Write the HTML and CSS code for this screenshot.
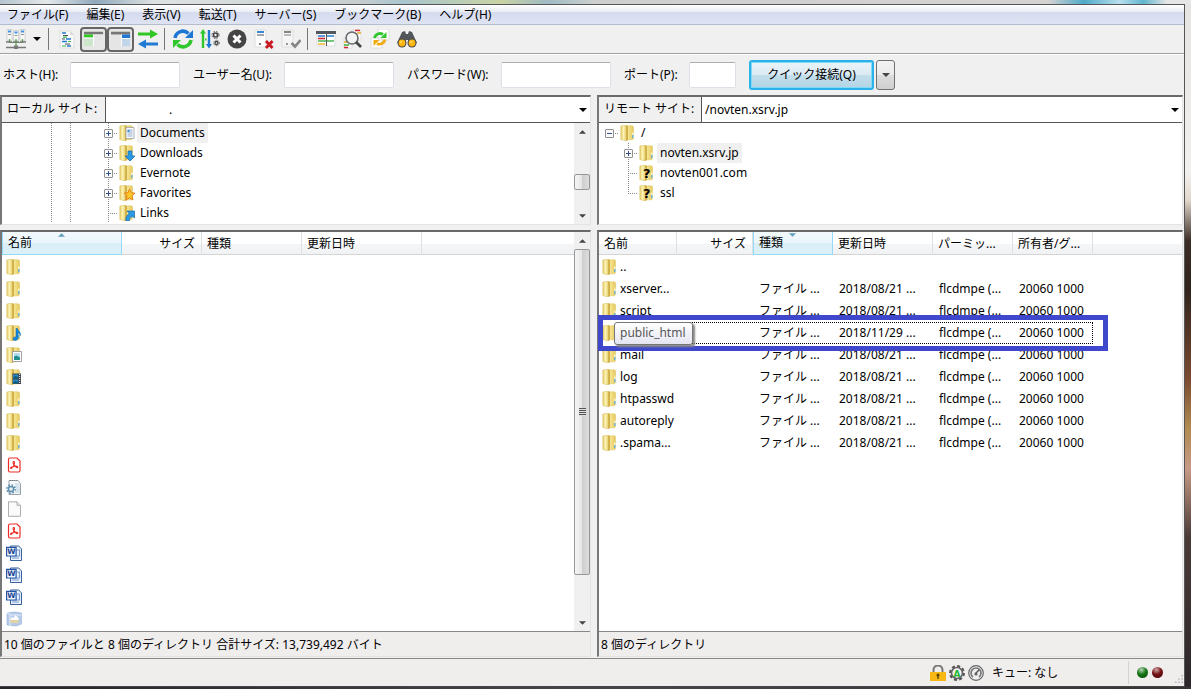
FILE: index.html
```html
<!DOCTYPE html>
<html lang="ja">
<head>
<meta charset="utf-8">
<title>FTP クライアント</title>
<link rel="stylesheet" href="styles.css">
</head>
<body>
<svg class="defs" aria-hidden="true">
  <defs>
    <linearGradient id="gold" x1="0" x2="1"><stop offset="0" stop-color="#fbf0a8"/><stop offset="1" stop-color="#e6c95e"/></linearGradient>
    <linearGradient id="gold2" x1="0" x2="1"><stop offset="0" stop-color="#e3c762"/><stop offset=".45" stop-color="#fcf4b8"/><stop offset="1" stop-color="#e6cc66"/></linearGradient>
    <symbol id="folder" viewBox="0 0 16 16">
      <path d="M6 .8h6.500l1 1v12l-1 1H6z" fill="url(#gold)" stroke="#dcc260" stroke-width=".5"/>
      <path d="M.8 1 6.500 0v16L.8 14.500z" fill="url(#gold2)" stroke="#d6bc5c" stroke-width=".5"/>
      <path d="M6.200.5 8 1v14l-1.800 1z" fill="#d0ae48"/>
      <path d="M12 7.500h1.700V13H12z" fill="#f8f0c0"/><path d="M12.200 10h1.200v3h-1.200z" fill="#4ba3d8"/>
    </symbol>
    <symbol id="folder-doc" viewBox="0 0 16 16"><use href="#folder"/><path d="M7 2.500h8v11H7z" fill="#fafcff" stroke="#9a9fa6" stroke-width=".8"/><path d="M8.500 5h5M8.500 7h5M8.500 9h5M8.500 11h5" stroke="#8aa3bf" stroke-width=".9"/><path d="M8.500 5h2v2h-2z" fill="#3a8fd4"/></symbol>
    <symbol id="folder-down" viewBox="0 0 16 16"><use href="#folder"/><path d="M9 6h4v5h3l-5 5-5-5h3z" fill="#2b9be6" stroke="#1567ab" stroke-width=".7"/></symbol>
    <symbol id="folder-star" viewBox="0 0 16 16"><use href="#folder"/><path d="m10.500 4 1.600 3.800 3.900.3-3 2.600 1 4.300-3.500-2.200L7 15l1-4.300-3-2.600 4-.3z" fill="#ffc928" stroke="#e57819" stroke-width=".9"/></symbol>
    <symbol id="folder-link" viewBox="0 0 16 16"><use href="#folder"/><path d="M8 6h7.500v7l-2.500-2.200c-2 1-2.600 2.700-2.500 5H7C6.200 12.500 8 10 10.300 8.500z" fill="#2b9be6" stroke="#1567ab" stroke-width=".7"/></symbol>
    <symbol id="folder-music" viewBox="0 0 16 16"><use href="#folder"/><path d="M10 3.500h1.500c.2 2.500 3.500 3 3 7l-1-1.700-1.500-1v5.500c0 1.500-1.500 2.200-3 2.200s-2.500-1.300-1.700-2.500S9.200 11.800 10 12z" fill="#168bdc" stroke="#0b5fa5" stroke-width=".5"/></symbol>
    <symbol id="folder-picture" viewBox="0 0 16 16"><use href="#folder"/><path d="M6.500 4.500h9v10h-9z" fill="#fff" stroke="#999" stroke-width=".9"/><path d="M8 6h6v7H8z" fill="#b4dcf0"/><path d="m8 9.500 2.500-1 3.500 2V13H8z" fill="#238c8c"/></symbol>
    <symbol id="folder-video" viewBox="0 0 16 16"><use href="#folder"/><path d="M6.500 4.500H15v10.500H6.500z" fill="#38404a"/><path d="M7 5.500h5.300v4H7zm0 5h5.300v4H7z" fill="#2785c5"/><path d="m7 9 2-2 3 1v1.500H7zm0 5 2-2 3 1v1.500H7z" fill="#135c70"/><path d="M13.700 5v10" stroke="#fff" stroke-dasharray="1 1"/></symbol>
    <symbol id="folder-unknown" viewBox="0 0 16 16"><use href="#folder"/><text x="4" y="13" font-family="DejaVu Sans, sans-serif" font-size="13" font-weight="700" fill="#000">?</text></symbol>
    <symbol id="pdf" viewBox="0 0 16 16"><path d="M4 1h7l3 3v9.500c0 1-.5 1.500-1.500 1.500H4c-1 0-1.500-.5-1.500-1.500v-11C2.500 1.500 3 1 4 1z" fill="#fff" stroke="#ee2c24" stroke-width="1.200"/><path d="M7.500 4.500c1.500-.5 1 2 .5 3.500S5.500 12 4.700 11.300s2.300-1.800 3.800-2.100 3.500.1 3.300 1-1.800.1-3-1.200S6.300 5 7.500 4.500z" fill="none" stroke="#ee2c24" stroke-width="1.100"/></symbol>
    <symbol id="config" viewBox="0 0 16 16"><path d="M3 1.500h9l2.500 3V15.500H3z" fill="#f7fafc" stroke="#8f979e" stroke-width=".9"/><path d="M4 1.500h8" stroke="#777" stroke-dasharray="1 1"/><path d="M9 5h4.500M9.500 7h4M10 9h4M10 11h4M9 13h5" stroke="#a9cbe1" stroke-width=".9"/><circle cx="5" cy="10" r="4.200" fill="none" stroke="#5e8cab" stroke-width="1.400" stroke-dasharray="1.700 1.600"/><circle cx="5" cy="10" r="2.600" fill="#e4f0f8" stroke="#5e8cab" stroke-width="1.500"/></symbol>
    <symbol id="blank" viewBox="0 0 16 16"><path d="M2.500.8H11l3.500 3.500v11h-12z" fill="#fafafa" stroke="#999" stroke-width=".8"/><path d="M11 .8v3.500h3.500" fill="#eee" stroke="#999" stroke-width=".8"/></symbol>
    <symbol id="word" viewBox="0 0 16 16"><path d="M4.500 1h8.300L15.500 4v11.500h-11z" fill="#edf4ff" stroke="#355f9d"/><path d="M11 5h2.500v6h-8M6 13h7" fill="none" stroke="#7297cc" stroke-width="1.200"/><path d="M.6 2.300h9.500V11H.6z" fill="#f3f7ff" stroke="#2455a4" stroke-width="1.200"/><text x="1.300" y="9.300" font-family="DejaVu Sans, sans-serif" font-size="7.500" font-weight="700" fill="#194391">W</text></symbol>
    <symbol id="package" viewBox="0 0 16 16"><path d="m1 2 8-1 6.500 1v11L10 15l-9-1z" fill="#b7cbe6" stroke="#91afd9" stroke-width=".6"/><path d="m1 2 4 2h10.500M4 4v11" stroke="#dfecff" fill="none"/><path d="M4.500 7.500h8V12h-8z" fill="#e3d3a3"/><path d="m4.500 8 2-2 1 1 2-3 3 3v2h-8z" fill="#fff"/></symbol>
    <symbol id="site-manager" viewBox="0 0 20 20"><g fill="#fafafa" stroke="#c4c4c4" stroke-width=".7"><path d="M1 .5h5v11H1zM7.500 1.500h5v10h-5zM14 .5h5v11h-5z"/></g><path d="M2 2.500h3M8.500 3.500h3M15 2.500h3" stroke="#3e91e3" stroke-width="1.800"/><path d="M2 5.500h3M8.500 6.500h3M15 5.500h3" stroke="#999"/><path d="M3.500 10v3.500h13V10M10 10v8" stroke="#58a94a" stroke-width="1.200" fill="none"/><path d="M0 13h6M7 13h6M14 13h6M0 18.500h20" stroke="#777" stroke-width="1.600"/><path d="M8 16.500h4V20H8z" fill="#777"/></symbol>
    <symbol id="log" viewBox="0 0 20 20"><path d="M3 2h10l4 4v13H3z" fill="#f9f9f9" stroke="#ddd"/><path d="M13 2v4h4" fill="#ddd"/><path d="M5 4h4M9 10h5M5 12.500h5M10 17h4" stroke="#2479d0" stroke-width="1.300"/><path d="M6 6.500h5M5 10h3M8 15h5" stroke="#4c525a" stroke-width="1.200"/><path d="M6 8.200h4M11 12.500h3M5 17h4" stroke="#39b54a" stroke-width="1.200"/></symbol>
    <symbol id="local-tree" viewBox="0 0 22 20"><path d="M0 2h21v16H0z" fill="#f6f6f6"/><path d="M0 2h21v3H0z" fill="#777"/><path d="M0 5h10v3.500H0z" fill="#2fca22"/><path d="M0 8.500h10V18H0z" fill="#cce6cc"/><path d="M11 5h10v13H11z" fill="#e6e6e6"/><path d="M10.500 5v13M0 9h10" stroke="#fff"/></symbol>
    <symbol id="remote-tree" viewBox="0 0 22 20"><path d="M0 2h21v16H0z" fill="#e5e5e5"/><path d="M0 2h21v3H0z" fill="#777"/><path d="M12 5h9v4h-9z" fill="#2078d2"/><path d="M12 9h9v9h-9z" fill="#c1d7e9"/><path d="M11.500 5v13M12 9.500h9" stroke="#fff"/></symbol>
    <symbol id="transfer" viewBox="0 0 20 20"><path d="M0 3.500h12V.5L20 5l-8 4.500v-3H0z" fill="#30c725"/><path d="M20 13.500H8v-3L0 15l8 4.500v-3h12z" fill="#207bd4"/></symbol>
    <symbol id="refresh" viewBox="0 0 20 20"><path d="M2 9a8 8 0 0 1 13.500-4.500" fill="none" stroke="#1e78d3" stroke-width="3.600"/><path d="M20 1v8h-8z" fill="#1e78d3"/><path d="M18 11A8 8 0 0 1 4.500 15.500" fill="none" stroke="#2fc72c" stroke-width="3.600"/><path d="M0 19v-8h8z" fill="#2fc72c"/></symbol>
    <symbol id="process" viewBox="0 0 20 20"><path d="m3 0 3 4.500H4.200V19H1.800V4.500H0zM5 9.500h1.500v2H5z" fill="#2fc72c"/><path d="M7.800 1h2.400v14H12l-3 4.500L6 15h1.800z" fill="#1e78d3"/><g fill="none" stroke="#444"><circle cx="15.500" cy="6" r="2" stroke-width="1.600"/><circle cx="15.500" cy="6" r="3.500" stroke-dasharray="1.500 1.300"/><circle cx="16.500" cy="14" r="1.500" stroke-width="1.300"/><circle cx="16.500" cy="14" r="2.800" stroke-dasharray="1 1"/></g></symbol>
    <symbol id="cancel" viewBox="0 0 20 20"><circle cx="10" cy="10" r="9.500" fill="#454545"/><path d="m6.500 6.500 7 7m0-7-7 7" stroke="#fff" stroke-width="3"/></symbol>
    <symbol id="disconnect" viewBox="0 0 20 20"><path d="M1 1h11v17H1z" fill="#fcfcfc" stroke="#ddd"/><path d="M3 3h7" stroke="#217bd2" stroke-width="1.800"/><path d="M3 6h7" stroke="#777" stroke-width="1.300"/><circle cx="6" cy="15" r="1" fill="#555"/><path d="m12 12 6.500 7m0-7L12 19" stroke="#c71922" stroke-width="2.800"/></symbol>
    <symbol id="reconnect" viewBox="0 0 20 20"><path d="M1 1h11v17H1z" fill="#f5f5f5" stroke="#ddd"/><path d="M3 3h7" stroke="#777" stroke-width="1.800"/><path d="M3 6h7" stroke="#999" stroke-width="1.300"/><circle cx="6" cy="15" r="1" fill="#777"/><path d="m10.500 14 3.500 3.500 5.500-6.500" fill="none" stroke="#858585" stroke-width="2.600"/></symbol>
    <symbol id="filter" viewBox="0 0 20 20"><path d="M1 3h18v14H1z" fill="#fff" stroke="#ddd"/><path d="M0 2h20v3H0z" fill="#53585d"/><path d="M2 7h7m2 0h7" stroke="#267fd1" stroke-width="1.400"/><path d="M2 9.500h7" stroke="#d62732" stroke-width="1.600"/><path d="M2 12h16" stroke="#37ae43" stroke-width="1.400"/><path d="M2 15h7" stroke="#edb322" stroke-width="1.400"/><path d="M10.500 5v12" stroke="#555"/></symbol>
    <symbol id="search" viewBox="0 0 20 20"><path d="M9 1h9v10H9zM1 9h8v10H1z" fill="#fff" stroke="#ddd"/><path d="M12 1.500h5" stroke="#d4242d" stroke-width="1.500"/><path d="M1 13h4m9-9h4" stroke="#dfab27" stroke-width="1.500"/><path d="M1 16h5" stroke="#36ad35" stroke-width="1.500"/><path d="M1 18.500h4" stroke="#d4242d" stroke-width="1.500"/><circle cx="9" cy="9" r="6" fill="#f2f4f4" fill-opacity=".9" stroke="#65696c" stroke-width="1.600"/><path d="m13 13 5 5" stroke="#444" stroke-width="2.600"/></symbol>
    <symbol id="sync" viewBox="0 0 20 20"><path d="M8 0h11v11H8zM1 9h11v10H1z" fill="#fff" stroke="#ddd"/><path d="M4.500 9A5.500 5.500 0 0 1 13 5.500" fill="none" stroke="#2fc72c" stroke-width="2.800"/><path d="M16.500 3v6h-6z" fill="#2fc72c"/><path d="M15 10.500A5.500 5.500 0 0 1 7 14.500" fill="none" stroke="#efaa12" stroke-width="2.800"/><path d="M3.500 17v-6h6z" fill="#efaa12"/></symbol>
    <symbol id="binoculars" viewBox="0 0 20 20"><path d="m5 3 3-1 1 3h2l1-3 3 1 5 11h-9v-3H9v3H0z" fill="#51565c"/><circle cx="5" cy="14" r="4.500" fill="#4b4b4b"/><circle cx="15" cy="14" r="4.500" fill="#4b4b4b"/><circle cx="5" cy="14" r="3.400" fill="#ffb70f"/><circle cx="15" cy="14" r="3.400" fill="#ffb70f"/><path d="M3 13h2m8 0h2" stroke="#fff0a0"/></symbol>
    <symbol id="lock" viewBox="0 0 16 16"><path d="M3.500 8V5a4.500 4.500 0 0 1 9 0v3" fill="none" stroke="#777" stroke-width="2"/><path d="M0 7h16v9H0z" fill="#f8b814"/><circle cx="8" cy="10" r="1.600" fill="#604706"/><path d="M7.300 10h1.400v4H7.300z" fill="#604706"/></symbol>
    <symbol id="gear" viewBox="0 0 16 16"><circle cx="8" cy="8" r="6.700" fill="none" stroke="#555" stroke-width="2.500" stroke-dasharray="3 2.250"/><circle cx="8" cy="8" r="5.500" fill="#f5f5f5" stroke="#666" stroke-width="1.700"/><text x="4.600" y="11.500" font-family="DejaVu Sans, sans-serif" font-size="9" font-weight="700" fill="#24b933">A</text></symbol>
    <symbol id="gauge" viewBox="0 0 16 16"><circle cx="8" cy="8" r="7.300" fill="#eee" stroke="#666" stroke-width="1.200"/><path d="M5 12a5 5 0 1 1 6 0" fill="none" stroke="#777" stroke-width="1.700"/><path d="m7 9 4-4" stroke="#555" stroke-width="1.500"/><circle cx="8" cy="9" r="1.600" fill="#666"/></symbol>
    <symbol id="down" viewBox="0 0 8 4"><path d="M0 0h8L4 4z" fill="currentColor"/></symbol>
    <symbol id="up" viewBox="0 0 8 4"><path d="M0 4h8L4 0z" fill="currentColor"/></symbol>
  </defs>
</svg>

<div class="desktop">
<main class="window">
  <nav class="menu">
    <button>ファイル(F)</button><button>編集(E)</button><button>表示(V)</button><button>転送(T)</button><button>サーバー(S)</button><button>ブックマーク(B)</button><button>ヘルプ(H)</button>
  </nav>

  <div class="toolbar">
    <button aria-label="サイトマネージャー"><svg class="tool"><use href="#site-manager"/></svg></button>
    <button class="narrow" aria-label="サイト一覧"><svg class="arrow"><use href="#down"/></svg></button>
    <span class="sep"></span>
    <button aria-label="ログ"><svg class="tool"><use href="#log"/></svg></button>
    <button class="pressed" aria-label="ローカルツリー"><svg class="tool"><use href="#local-tree"/></svg></button>
    <button class="pressed" aria-label="リモートツリー"><svg class="tool"><use href="#remote-tree"/></svg></button>
    <button aria-label="転送キュー"><svg class="tool"><use href="#transfer"/></svg></button>
    <span class="sep"></span>
    <button aria-label="更新"><svg class="tool"><use href="#refresh"/></svg></button>
    <button aria-label="キュー処理"><svg class="tool"><use href="#process"/></svg></button>
    <button aria-label="中止"><svg class="tool"><use href="#cancel"/></svg></button>
    <button aria-label="切断"><svg class="tool"><use href="#disconnect"/></svg></button>
    <button aria-label="再接続"><svg class="tool"><use href="#reconnect"/></svg></button>
    <span class="sep"></span>
    <button aria-label="フィルター"><svg class="tool"><use href="#filter"/></svg></button>
    <button aria-label="比較"><svg class="tool"><use href="#search"/></svg></button>
    <button aria-label="同期"><svg class="tool"><use href="#sync"/></svg></button>
    <button aria-label="検索"><svg class="tool"><use href="#binoculars"/></svg></button>
  </div>

  <form class="quick">
    <div class="field host"><label for="host">ホスト(H):</label><input id="host" type="text"></div>
    <div class="field user"><label for="user">ユーザー名(U):</label><input id="user" type="text"></div>
    <div class="field pass"><label for="pass">パスワード(W):</label><input id="pass" type="password"></div>
    <div class="field port"><label for="port">ポート(P):</label><input id="port" type="text"></div>
    <button type="button" class="connect">クイック接続(Q)</button>
    <button type="button" class="history" aria-label="接続履歴"><svg class="arrow"><use href="#down"/></svg></button>
  </form>

  <div class="panes">
    <section class="side">
      <div class="box top">
        <div class="path local"><label for="lpath">ローカル サイト:</label><div class="combo"><select id="lpath"><option>.</option></select><svg class="arrow"><use href="#down"/></svg></div></div>
        <div class="treebox">
          <ul class="tree local-tree">
            <li><i class="g v"></i><i class="g v"></i><i class="g"></i><i class="g v h"><b class="ex plus"></b></i><svg class="ico"><use href="#folder-doc"/></svg><span class="name sel">Documents</span></li>
            <li><i class="g v"></i><i class="g v"></i><i class="g"></i><i class="g v h"><b class="ex plus"></b></i><svg class="ico"><use href="#folder-down"/></svg><span class="name">Downloads</span></li>
            <li><i class="g v"></i><i class="g v"></i><i class="g"></i><i class="g v h"><b class="ex plus"></b></i><svg class="ico"><use href="#folder"/></svg><span class="name">Evernote</span></li>
            <li><i class="g v"></i><i class="g v"></i><i class="g"></i><i class="g v h"><b class="ex plus"></b></i><svg class="ico"><use href="#folder-star"/></svg><span class="name">Favorites</span></li>
            <li><i class="g v"></i><i class="g v"></i><i class="g"></i><i class="g v h"></i><svg class="ico"><use href="#folder-link"/></svg><span class="name">Links</span></li>
          </ul>
          <div class="scroll"><button aria-label="上へ"><svg><use href="#up"/></svg></button><div class="track"><span class="gap-a"></span><span class="thumb small"></span><span class="gap-b"></span></div><button aria-label="下へ"><svg><use href="#down"/></svg></button></div>
        </div>
      </div>
      <div class="box bottom">
        <div class="listrow">
          <div class="list">
            <table class="files tl">
              <colgroup><col class="w120"><col class="w80"><col class="w100"><col class="w120"></colgroup>
              <thead><tr><th class="sorted">名前<svg class="mark"><use href="#up"/></svg></th><th class="num">サイズ</th><th>種類</th><th>更新日時</th></tr></thead>
              <tbody>
                <tr><td colspan="4"><svg class="ico"><use href="#folder"/></svg></td></tr>
                <tr><td colspan="4"><svg class="ico"><use href="#folder"/></svg></td></tr>
                <tr><td colspan="4"><svg class="ico"><use href="#folder"/></svg></td></tr>
                <tr><td colspan="4"><svg class="ico"><use href="#folder-music"/></svg></td></tr>
                <tr><td colspan="4"><svg class="ico"><use href="#folder-picture"/></svg></td></tr>
                <tr><td colspan="4"><svg class="ico"><use href="#folder-video"/></svg></td></tr>
                <tr><td colspan="4"><svg class="ico"><use href="#folder"/></svg></td></tr>
                <tr><td colspan="4"><svg class="ico"><use href="#folder"/></svg></td></tr>
                <tr><td colspan="4"><svg class="ico"><use href="#folder"/></svg></td></tr>
                <tr><td colspan="4"><svg class="ico"><use href="#pdf"/></svg></td></tr>
                <tr><td colspan="4"><svg class="ico"><use href="#config"/></svg></td></tr>
                <tr><td colspan="4"><svg class="ico"><use href="#blank"/></svg></td></tr>
                <tr><td colspan="4"><svg class="ico"><use href="#pdf"/></svg></td></tr>
                <tr><td colspan="4"><svg class="ico"><use href="#word"/></svg></td></tr>
                <tr><td colspan="4"><svg class="ico"><use href="#word"/></svg></td></tr>
                <tr><td colspan="4"><svg class="ico"><use href="#word"/></svg></td></tr>
                <tr><td colspan="4"><svg class="ico"><use href="#package"/></svg></td></tr>
              </tbody>
            </table>
          </div>
          <div class="scroll"><button aria-label="上へ"><svg><use href="#up"/></svg></button><div class="track"><span class="thumb large"><i class="grip"></i></span><span class="rest"></span></div><button aria-label="下へ"><svg><use href="#down"/></svg></button></div>
        </div>
        <div class="summary">10 個のファイルと 8 個のディレクトリ 合計サイズ: 13,739,492 バイト</div>
      </div>
    </section>

    <section class="side remote">
      <div class="box top">
        <div class="path remote-path"><label for="rpath">リモート サイト:</label><div class="combo"><select id="rpath"><option>/novten.xsrv.jp</option></select><svg class="arrow"><use href="#down"/></svg></div></div>
        <div class="treebox">
          <ul class="tree remote-tree">
            <li><i class="g h"><b class="ex"></b></i><svg class="ico"><use href="#folder"/></svg><span class="name">/</span></li>
            <li><i class="g"></i><i class="g v h"><b class="ex plus"></b></i><svg class="ico"><use href="#folder"/></svg><span class="name sel">novten.xsrv.jp</span></li>
            <li><i class="g"></i><i class="g v h"></i><svg class="ico"><use href="#folder-unknown"/></svg><span class="name">novten001.com</span></li>
            <li><i class="g"></i><i class="g v last h"></i><svg class="ico"><use href="#folder-unknown"/></svg><span class="name">ssl</span></li>
          </ul>
        </div>
      </div>
      <div class="box bottom">
        <div class="listrow">
          <div class="list">
            <table class="files tr">
              <colgroup><col class="w78"><col class="w76"><col class="w80"><col class="w100"><col class="w80"><col class="w80"></colgroup>
              <thead><tr><th>名前</th><th class="num">サイズ</th><th class="sorted">種類<svg class="mark"><use href="#down"/></svg></th><th>更新日時</th><th>パーミッ...</th><th>所有者/グ...</th></tr></thead>
              <tbody>
                <tr><td><svg class="ico"><use href="#folder"/></svg>..</td><td></td><td></td><td></td><td></td><td></td></tr>
                <tr><td><svg class="ico"><use href="#folder"/></svg>xserver...</td><td></td><td>ファイル ...</td><td>2018/08/21 ...</td><td>flcdmpe (...</td><td>20060 1000</td></tr>
                <tr><td><svg class="ico"><use href="#folder"/></svg>script</td><td></td><td>ファイル ...</td><td>2018/08/21 ...</td><td>flcdmpe (...</td><td>20060 1000</td></tr>
                <tr class="focus"><td><svg class="ico"><use href="#folder"/></svg><span class="frame"></span><span class="tip">public_html</span></td><td></td><td>ファイル ...</td><td>2018/11/29 ...</td><td>flcdmpe (...</td><td>20060 1000</td></tr>
                <tr><td><svg class="ico"><use href="#folder"/></svg>mail</td><td></td><td>ファイル ...</td><td>2018/08/21 ...</td><td>flcdmpe (...</td><td>20060 1000</td></tr>
                <tr><td><svg class="ico"><use href="#folder"/></svg>log</td><td></td><td>ファイル ...</td><td>2018/08/21 ...</td><td>flcdmpe (...</td><td>20060 1000</td></tr>
                <tr><td><svg class="ico"><use href="#folder"/></svg>htpasswd</td><td></td><td>ファイル ...</td><td>2018/08/21 ...</td><td>flcdmpe (...</td><td>20060 1000</td></tr>
                <tr><td><svg class="ico"><use href="#folder"/></svg>autoreply</td><td></td><td>ファイル ...</td><td>2018/08/21 ...</td><td>flcdmpe (...</td><td>20060 1000</td></tr>
                <tr><td><svg class="ico"><use href="#folder"/></svg>.spama...</td><td></td><td>ファイル ...</td><td>2018/08/21 ...</td><td>flcdmpe (...</td><td>20060 1000</td></tr>
              </tbody>
            </table>
          </div>
        </div>
        <div class="summary">8 個のディレクトリ</div>
      </div>
    </section>
  </div>

  <footer class="status">
    <div class="state"><svg class="ico"><use href="#lock"/></svg><svg class="ico"><use href="#gear"/></svg><svg class="ico"><use href="#gauge"/></svg><span class="queue">キュー: なし</span></div>
    <div class="leds"><i class="led green"></i><i class="led red"></i><svg class="sizer" viewBox="0 0 10 10"><path d="M8 0h2v2H8zM4 4h2v2H4zM8 4h2v2H8zM0 8h2v2H0zM4 8h2v2H4zM8 8h2v2H8z" fill="#bbb"/></svg></div>
  </footer>
</main>
</div>
</body>
</html>
```
FILE: styles.css
```css
* { box-sizing: border-box; }
body {
  margin: 0;
  font: 12px/16px "Noto Sans", "Noto Sans CJK JP", sans-serif;
  color: #000;
}
button, input, select { font: inherit; color: inherit; margin: 0; }
button { padding: 0; border: 0; background: none; }
.defs { position: absolute; width: 0; height: 0; }
svg { display: block; flex: none; }

.desktop {
  height: 100vh;
  padding: 4px 6px 2px 0;
  background:
    linear-gradient(90deg, #b4c4ce, #e5e8ea 4%, #8fa9bd 8%, #dfe3e3 13%, #c8cdd0 30%, #a9c6cf 34%, #c9d3a4 42%, #9fbbc4 46%, #cfcfcf 50%, #d5d2d2 88%, #4fabc8 91%, #b7e0ee 94%, #62b5cf 96%, #e6e6e6 98%) top / 100% 4px no-repeat,
    linear-gradient(90deg, #26242b, #48444c 50%, #3a3338) bottom / 100% 2px no-repeat,
    linear-gradient(#e6e4e2, #f2f0ef 25%, #e2d8cc 29%, #3b2d25 35%, #30231c 42%, #7a4a30 55%, #b08a50 62%, #c79a86 68%, #4a3a36 78%, #2c272b);
}
.window {
  height: 100%;
  display: flex;
  flex-direction: column;
  background: #f0f0f0;
  border-top: 1px solid #555;
  border-right: 1px solid #555;
  border-bottom: 1px solid #444;
}

.menu {
  flex: none;
  height: 20px;
  display: flex;
  align-items: center;
  gap: 18px;
  padding-left: 7px;
  background: linear-gradient(#fff, #e9edf6 35%, #d5dbee 40%, #dfe4f4);
  border-bottom: 1px solid #b4bccd;
}
.menu button { white-space: nowrap; }

.toolbar {
  flex: none;
  height: 29px;
  display: flex;
  align-items: center;
  padding-left: 2px;
  border-bottom: 1px solid #a0a0a0;
}
.toolbar button {
  width: 27px;
  height: 25px;
  display: flex;
  align-items: center;
  justify-content: center;
}
.toolbar .narrow { width: 16px; }
.toolbar .pressed {
  border: 2px solid #666;
  border-radius: 4px;
  background: #e6e6e6;
}
.sep { width: 8px; height: 22px; background: linear-gradient(#777, #777) 3px 0 / 1px 100% no-repeat; }
.tool { width: 20px; height: 20px; }
.arrow { width: 8px; height: 4px; }

.quick {
  flex: none;
  height: 41px;
  display: flex;
  align-items: center;
  gap: 13px;
  padding-left: 3px;
  border-top: 1px solid #fff;
}
.field { display: flex; align-items: center; }
.field label { white-space: nowrap; }
.field input {
  width: 110px;
  height: 26px;
  border: 1px solid #dfdfe8;
  border-top-color: #abadb3;
  border-radius: 2px;
  background: #fff;
}
.host label { width: 67px; }
.user label { width: 91px; }
.pass label { width: 94px; }
.port label { width: 65px; }
.port input { width: 47px; }
.connect {
  width: 125px;
  height: 30px;
  border: 2px solid #2cb1e8;
  border-radius: 3px;
  background: linear-gradient(#eaf4f9, #daeaf3 49%, #c3dfec 50%, #b3d4e4);
  box-shadow: inset 0 0 0 1px #7fdcf8;
}
.history {
  width: 19px;
  height: 30px;
  display: flex;
  align-items: center;
  justify-content: center;
  margin-left: -11px;
  border: 1px solid #707070;
  border-radius: 3px;
  background: linear-gradient(#f2f2f2, #ebebeb 49%, #ddd 50%, #cfcfcf);
  color: #444;
}

.panes {
  flex: 1;
  min-height: 0;
  display: grid;
  grid-template-columns: 591fr 586fr;
  gap: 6px;
  padding-right: 1px;
}
.side { display: flex; flex-direction: column; gap: 5px; min-width: 0; min-height: 0; }
.box {
  border: 1px solid #e3e3e3;
  border-top: 2px solid #696969;
  border-left: 2px solid #777;
  background: #fff;
}
.top { flex: none; }
.bottom { flex: 1; min-height: 0; display: flex; flex-direction: column; }
.path { display: flex; height: 26px; border-bottom: 1px solid #555; }
.path label {
  flex: none;
  padding: 4px 0 0 5px;
  background: #f0f0f0;
  border-right: 1px solid #555;
  white-space: nowrap;
}
.local label { width: 104px; }
.remote-path label { width: 103px; }
.combo { flex: 1; display: grid; align-items: center; }
.combo select {
  grid-area: 1 / 1;
  width: 100%;
  height: 25px;
  appearance: none;
  border: 0;
  padding: 0 20px 0 3px;
  background: #fff;
}
.local select { padding-left: 63px; }
.combo .arrow { grid-area: 1 / 1; justify-self: end; margin-right: 3px; pointer-events: none; }

.treebox { display: flex; height: 101px; }
.tree { flex: 1; margin: 0; padding: 0; list-style: none; overflow: hidden; }
.tree li { display: flex; align-items: center; height: 20px; }
.local-tree { padding-left: 40px; }
.remote-tree { padding-left: 1px; }
.g { width: 19px; height: 20px; display: flex; align-items: center; justify-content: center; background-repeat: no-repeat; }
.v { background-image: repeating-linear-gradient(#888 0 1px, #fff 1px 2px); background-size: 1px 100%; background-position: 9px 0; }
.h { background-image: repeating-linear-gradient(90deg, #888 0 1px, #fff 1px 2px); background-size: 10px 1px; background-position: 9px 10px; }
.v.h {
  background-image: repeating-linear-gradient(#888 0 1px, #fff 1px 2px), repeating-linear-gradient(90deg, #888 0 1px, #fff 1px 2px);
  background-size: 1px 100%, 10px 1px;
  background-position: 9px 0, 9px 10px;
}
.v.h.last { background-size: 1px 10px, 10px 1px; }
.ex {
  width: 9px;
  height: 9px;
  border: 1px solid #919191;
  border-radius: 1px;
  background: linear-gradient(#36528f, #36528f) center / 5px 1px no-repeat, #fafafa;
}
.ex.plus { background: linear-gradient(#36528f, #36528f) center / 5px 1px no-repeat, linear-gradient(#36528f, #36528f) center / 1px 5px no-repeat, #fafafa; }
.ico { width: 16px; height: 16px; }
.tree .ico { margin-left: 1px; }
.name { margin-left: 2px; padding: 2px 3px; }
.sel { background: #f0f0f0; }

.scroll { flex: none; width: 16px; display: flex; flex-direction: column; background: #f0f0f0; }
.scroll button { height: 17px; display: flex; align-items: center; justify-content: center; color: #444; }
.scroll button svg { width: 7px; height: 4px; }
.track { flex: 1; display: flex; flex-direction: column; min-height: 0; }
.thumb {
  border: 1px solid #979797;
  border-radius: 2px;
  background: linear-gradient(90deg, #f5f5f5, #e6e6e6 48%, #cfcfd2 52%, #dcdcdc);
}
.gap-a { flex: 34; }
.gap-b { flex: 17; }
.thumb.small { height: 16px; }
.thumb.large { flex: 326; display: flex; align-items: center; justify-content: center; }
.rest { flex: 39; }
.grip { width: 7px; height: 8px; background: repeating-linear-gradient(#555 0 1px, #ddd 1px 2px); }

.listrow { flex: 1; display: flex; min-height: 0; }
.list { flex: 1; min-width: 0; background: linear-gradient(#fff, #fff 50%, #f5f6f8 50%, #f1f2f4 95%, #d5d5d5 96%) top / 100% 23px no-repeat; }
.files { table-layout: fixed; border-collapse: separate; border-spacing: 0; }
.tl { width: 420px; }
.tr { width: 494px; }
.w120 { width: 120px; }
.w100 { width: 100px; }
.w80 { width: 80px; }
.w78 { width: 78px; }
.w76 { width: 76px; }
.files th {
  position: relative;
  height: 23px;
  padding: 0 6px 0 5px;
  border-right: 1px solid #dfe0e2;
  font-weight: 400;
  text-align: left;
  white-space: nowrap;
}
.files th.num { text-align: right; }
.files th.sorted {
  border: 1px solid #96d9f9;
  border-top: 0;
  background: linear-gradient(#f2f9fc, #eaf6fb 48%, #d9eef7 50%, #dcf0f8);
}
.mark { position: absolute; top: 1px; left: 50%; width: 7px; height: 4px; margin-left: -4px; color: #5f9fbc; }
.files tbody::before { content: ""; display: block; height: 1px; }
.files td { height: 22px; padding: 0 0 0 6px; white-space: nowrap; }
.files td:first-child { padding-left: 3px; }
.files td .ico { display: inline-block; vertical-align: middle; margin-right: 2px; }
.tl td:first-child { padding-left: 4px; }
.focus { position: relative; }
.tip {
  position: absolute;
  left: 15px;
  top: 0;
  height: 23px;
  padding: 2px 6px 2px 5px;
  border: 1px solid #767676;
  border-radius: 3px;
  background: linear-gradient(#fff, #e4e5f0);
  box-shadow: 2px 2px 2px #888;
  color: #575757;
}
.frame { position: absolute; top: -7px; right: -15px; bottom: -7px; left: -1px; border: 5px solid #3f48cc; pointer-events: none; }
.frame::after { content: ""; position: absolute; top: 2px; right: 10px; bottom: 2px; left: 20px; border: 1px dotted #000; }

.summary {
  flex: none;
  height: 25px;
  padding: 5px 2px 0;
  background: #f0eded;
  border-top: 1px solid #888;
}
.status {
  flex: none;
  height: 28px;
  display: flex;
  justify-content: flex-end;
  margin-top: 1px;
  background: #f0eded;
  border-top: 1px solid #888;
}
.state { display: flex; align-items: center; gap: 3px; width: 198px; }
.queue { margin-left: 5px; }
.leds { width: 56px; display: flex; align-items: center; gap: 4px; margin: 2px 0; padding-left: 8px; border-left: 1px solid #d5d2d2; }
.led { width: 11px; height: 11px; border-radius: 50%; }
.green { background: radial-gradient(circle at 40% 25%, #b7d8b7, #167516 45%, #064906); }
.red { background: radial-gradient(circle at 40% 25%, #d2a5a5, #741217 45%, #430709); }
.sizer { width: 8px; height: 8px; align-self: flex-end; margin: 0 0 1px 8px; }
```
